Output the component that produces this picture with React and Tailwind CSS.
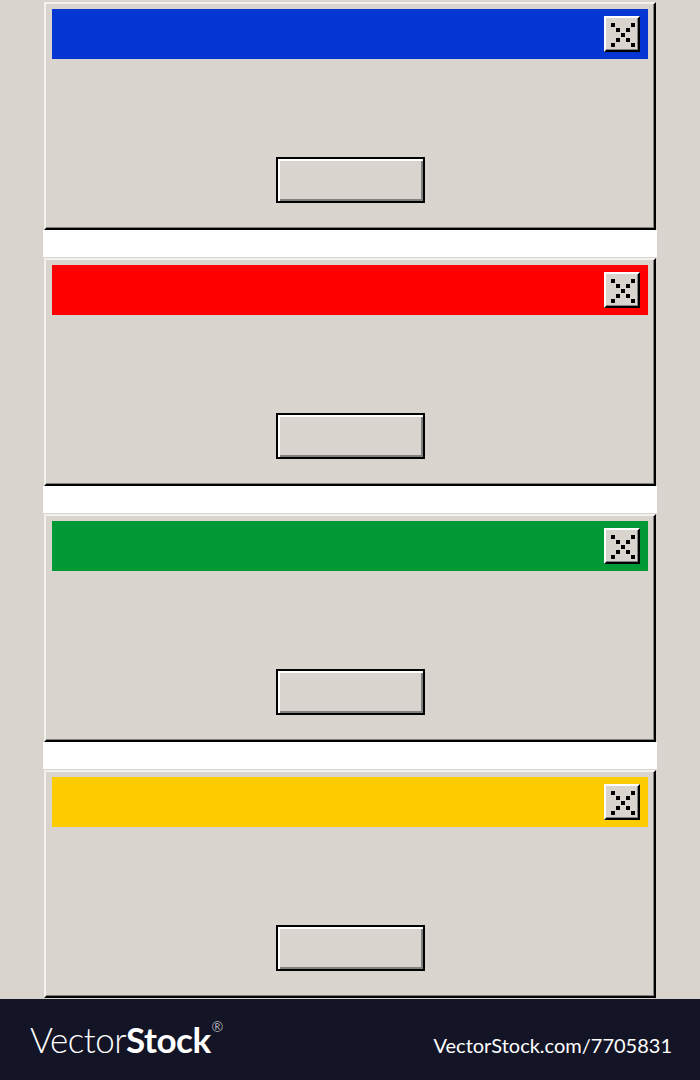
import React from "react";

function CloseIcon() {
  const cells = [
    [0, 0], [4, 0],
    [1, 1], [3, 1],
    [2, 2],
    [1, 3], [3, 3],
    [0, 4], [4, 4],
  ];
  return (
    <svg width="24" height="24" viewBox="0 0 24 24" shapeRendering="crispEdges">
      {cells.map(([x, y], i) => (
        <rect key={i} x={x * 5} y={y * 5} width="4" height="4" fill="#000" />
      ))}
    </svg>
  );
}

function Window({ color }) {
  return (
    <div className="mx-px h-[228px] flex flex-col bg-[#d9d4cd] border-t-2 border-l-2 border-t-[#f4f2ef] border-l-[#f4f2ef] border-r-2 border-b-2 border-r-black border-b-black shadow-[inset_-1px_-1px_0_#808080] px-[6px] pt-[5px]">
      <div className={`h-[50px] flex items-center justify-end pr-[8px] ${color}`}>
        <div className="w-[36px] h-[36px] flex items-center justify-center pl-[1px] pt-[1px] bg-[#d9d4cd] border-t-2 border-l-2 border-t-white border-l-white border-r-2 border-b-2 border-r-black border-b-black shadow-[inset_-1px_-1px_0_#808080]">
          <CloseIcon />
        </div>
      </div>
      <div className="flex-1 flex justify-center pt-[98px]">
        <div className="w-[149px] h-[46px] border-2 border-black bg-[#d9d4cd] shadow-[inset_2px_2px_0_#fff,inset_-2px_-2px_0_#808080]" />
      </div>
    </div>
  );
}

function Gap() {
  return (
    <div className="h-[28px]">
      <div className="h-[27px] bg-white" />
    </div>
  );
}

export default function App() {
  return (
    <div className="w-[700px] h-[1080px] bg-[#d9d4cd] flex flex-col overflow-hidden" style={{ fontFamily: "Lato, 'Open Sans', sans-serif" }}>
      <div className="pt-[2px] px-[43px]">
        <Window color="bg-[#0436d3]" />
        <Gap />
        <Window color="bg-[#ff0000]" />
        <Gap />
        <Window color="bg-[#029a36]" />
        <Gap />
        <Window color="bg-[#ffcc00]" />
      </div>
      <div className="mt-[1px] flex-1 bg-[#131426] flex items-center justify-between pl-[30px] pr-[28px]">
        <div className="text-white text-[35px] leading-none tracking-[-0.5px] flex items-start">
          <span className="font-light">Vector</span>
          <span className="font-bold">Stock</span>
          <span className="text-[14px] font-light ml-[1px] -mt-[2px]">®</span>
        </div>
        <div className="text-white text-[20px] leading-none mt-[10px]">VectorStock.com/7705831</div>
      </div>
    </div>
  );
}
